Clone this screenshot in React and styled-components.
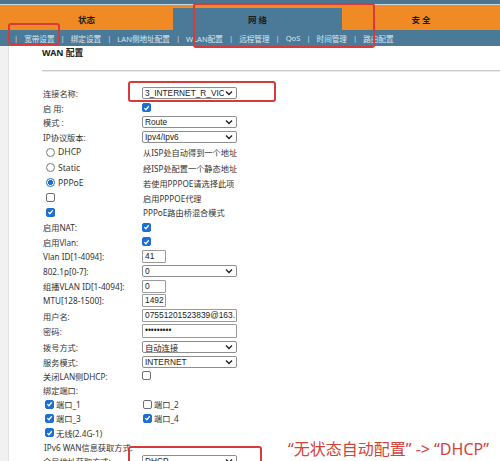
import React from 'react';
import styled, { createGlobalStyle } from 'styled-components';

const Global = createGlobalStyle`
  html, body { margin: 0; padding: 0; background: #fff; }
  body {
    font-family: "Noto Sans", "Noto Sans CJK SC", sans-serif;
    color: #333;
  }
`;

const tabs = [
  { label: '状态' },
  { label: '网 络', active: true },
  { label: '安 全' },
];

const subNav = ['宽带设置', '绑定设置', 'LAN侧地址配置', 'WLAN配置', '远程管理', 'QoS', '时间管理', '路由配置'];

function Select({ value }) {
  return (
    <F.Select>
      <span>{value}</span>
      <svg width="8" height="6" viewBox="0 0 8 6">
        <path d="M1 1.5 L4 4.5 L7 1.5" fill="none" stroke="#222" strokeWidth="1.4" />
      </svg>
    </F.Select>
  );
}

function Check({ on }) {
  return (
    <F.Check $on={on}>
      {on && (
        <svg width="8" height="8" viewBox="0 0 8 8">
          <path d="M1.5 4.2 L3.3 6 L6.6 2" fill="none" stroke="#fff" strokeWidth="1.4" />
        </svg>
      )}
    </F.Check>
  );
}

function Radio({ on }) {
  return <F.Radio $on={on} />;
}

function App() {
  return (
    <P.Page>
      <Global />
      <P.TopStrip />
      <P.Tabs>
        {tabs.map((t) => (
          <P.Tab key={t.label} $active={t.active}>
            {t.label}
          </P.Tab>
        ))}
      </P.Tabs>
      <P.SubNav>
        <span className="sep">|</span>
        {subNav.map((s, i) => (
          <React.Fragment key={s}>
            <span>{s}</span>
            {i < subNav.length - 1 && <span className="sep">|</span>}
          </React.Fragment>
        ))}
      </P.SubNav>
      <P.Body>
        <P.Gutter />
        <P.Main>
          <P.Title>WAN 配置</P.Title>
          <P.Rule />
          <P.Row>
            <P.Label>连接名称:</P.Label>
            <Select value="3_INTERNET_R_VIC" />
          </P.Row>
          <P.Row $h={14}>
            <P.Label>启 用:</P.Label>
            <Check on />
          </P.Row>
          <P.Row>
            <P.Label>模式 :</P.Label>
            <Select value="Route" />
          </P.Row>
          <P.Row>
            <P.Label>IP协议版本:</P.Label>
            <Select value="Ipv4/Ipv6" />
          </P.Row>
          <P.Row $h={15.5}>
            <P.Option>
              <Radio /> DHCP
            </P.Option>
            <P.Label>从ISP处自动得到一个地址</P.Label>
          </P.Row>
          <P.Row $h={15.5}>
            <P.Option>
              <Radio /> Static
            </P.Option>
            <P.Label>经ISP处配置一个静态地址</P.Label>
          </P.Row>
          <P.Row $h={15}>
            <P.Option>
              <Radio on /> PPPoE
            </P.Option>
            <P.Label>若使用PPPOE请选择此项</P.Label>
          </P.Row>
          <P.Row>
            <P.Option>
              <Check />
            </P.Option>
            <P.Label>启用PPPOE代理</P.Label>
          </P.Row>
          <P.Row>
            <P.Option>
              <Check on />
            </P.Option>
            <P.Label>PPPoE路由桥混合模式</P.Label>
          </P.Row>
          <P.Row>
            <P.Label>启用NAT:</P.Label>
            <Check on />
          </P.Row>
          <P.Row>
            <P.Label>启用Vlan:</P.Label>
            <Check on />
          </P.Row>
          <P.Row>
            <P.Label>Vlan ID[1-4094]:</P.Label>
            <F.Input>41</F.Input>
          </P.Row>
          <P.Row>
            <P.Label>802.1p[0-7]:</P.Label>
            <Select value="0" />
          </P.Row>
          <P.Row>
            <P.Label>组播VLAN ID[1-4094]:</P.Label>
            <F.Input>0</F.Input>
          </P.Row>
          <P.Row>
            <P.Label>MTU[128-1500]:</P.Label>
            <F.Input>1492</F.Input>
          </P.Row>
          <P.Row>
            <P.Label>用户名:</P.Label>
            <F.Input $wide>07551201523839@163.</F.Input>
          </P.Row>
          <P.Row $h={16}>
            <P.Label>密码:</P.Label>
            <F.Input $wide $tall>•••••••••</F.Input>
          </P.Row>
          <P.Row $h={15.5}>
            <P.Label>拨号方式:</P.Label>
            <Select value="自动连接" />
          </P.Row>
          <P.Row $h={14}>
            <P.Label>服务模式:</P.Label>
            <Select value="INTERNET" />
          </P.Row>
          <P.Row $h={14}>
            <P.Label>关闭LAN侧DHCP:</P.Label>
            <Check />
          </P.Row>
          <P.Row $h={14.5}>
            <P.Label>绑定端口:</P.Label>
          </P.Row>
          <P.Row $h={14}>
            <P.Port>
              <Check on />
              端口_1
            </P.Port>
            <P.Port $second>
              <Check />
              端口_2
            </P.Port>
          </P.Row>
          <P.Row $h={14}>
            <P.Port>
              <Check on />
              端口_3
            </P.Port>
            <P.Port $second>
              <Check on />
              端口_4
            </P.Port>
          </P.Row>
          <P.Row $h={15}>
            <P.Port>
              <Check on />
              无线(2.4G-1)
            </P.Port>
          </P.Row>
          <P.Row $h={14}>
            <P.Wide>IPv6 WAN信息获取方式:</P.Wide>
            <P.Note>“无状态自动配置” -&gt; “DHCP”</P.Note>
          </P.Row>
          <P.Row>
            <P.Label>全局地址获取方式:</P.Label>
            <Select value="DHCP" />
          </P.Row>
        </P.Main>
      </P.Body>

      <P.Mark $x={8} $y={23} $w={52} $h={22} />
      <P.Mark $x={193} $y={3} $w={182} $h={45} />
      <P.Mark $x={128} $y={81} $w={148} $h={21} />
      <P.Mark $x={128} $y={446} $w={134} $h={24} />
    </P.Page>
  );
}

export default App;

const P = {
  Page: styled.div`
    position: relative;
    width: 500px;
    height: 461px;
    overflow: hidden;
    background: #fff;
  `,
  TopStrip: styled.div`
    height: 4px;
    background: #4d7590;
    border-bottom: 1px solid #c9d6de;
  `,
  Tabs: styled.div`
    display: grid;
    grid-template-columns: 173px 169px 1fr;
    height: 25px;
    background: #f08a24;
  `,
  Tab: styled.div`
    display: flex;
    align-items: center;
    justify-content: center;
    margin-top: ${(p) => (p.$active ? '3px' : '0')};
    padding-top: ${(p) => (p.$active ? '0' : '3px')};
    background: ${(p) => (p.$active ? '#4b7998' : '#f08a24')};
    color: #1d1d1d;
    font-size: 8.5px;
    font-weight: 700;
  `,
  SubNav: styled.div`
    display: flex;
    align-items: center;
    gap: 6px;
    height: 16px;
    padding-left: 14px;
    background: #4b7998;
    color: #dbe6ee;
    font-size: 7.6px;
    white-space: nowrap;
    .sep {
      color: #d0dde6;
    }
  `,
  Body: styled.div`
    display: flex;
  `,
  Gutter: styled.div`
    width: 8px;
    height: 420px;
    background: #f1f1f1;
    border-right: 1px solid #e2e2e2;
  `,
  Main: styled.div`
    flex: 1;
    padding-left: 33px;
  `,
  Title: styled.div`
    height: 15px;
    line-height: 15px;
    font-size: 8.8px;
    font-weight: 700;
    color: #222;
  `,
  Rule: styled.div`
    margin-top: 9px;
    margin-bottom: 15px;
    height: 1px;
    background: #c9c9c9;
    box-shadow: 0 1px 0 #ececec;
  `,
  Row: styled.div`
    position: relative;
    display: grid;
    grid-template-columns: 100px 1fr;
    align-items: center;
    height: ${(p) => p.$h || 14.75}px;
    font-size: 8.2px;
  `,
  Label: styled.div`
    color: #333;
    white-space: nowrap;
    padding-left: 1px;
  `,
  Option: styled.div`
    display: flex;
    align-items: center;
    gap: 3px;
    padding-left: 4px;
    color: #333;
    font-size: 8.6px;
  `,
  Port: styled.div`
    display: flex;
    align-items: center;
    gap: 2px;
    padding-left: ${(p) => (p.$second ? '1px' : '3px')};
    color: #333;
    white-space: nowrap;
  `,
  Wide: styled.div`
    grid-column: 1 / span 2;
    padding-left: 2px;
    color: #333;
    white-space: nowrap;
  `,
  Note: styled.div`
    position: absolute;
    left: 246px;
    top: -4px;
    color: #d2433a;
    font-size: 16px;
    white-space: nowrap;
  `,
  Mark: styled.div`
    position: absolute;
    left: ${(p) => p.$x}px;
    top: ${(p) => p.$y}px;
    width: ${(p) => p.$w}px;
    height: ${(p) => p.$h}px;
    border: 2px solid #d63a3a;
    border-radius: 3px;
    box-sizing: border-box;
    pointer-events: none;
  `,
};

const F = {
  Select: styled.div`
    display: flex;
    align-items: center;
    justify-content: space-between;
    box-sizing: border-box;
    width: 95px;
    height: 12px;
    padding: 0 3px 0 2px;
    border: 1px solid #8d8d8d;
    border-radius: 2px;
    background: #fff;
    color: #222;
    font-family: "Liberation Sans", "Noto Sans CJK SC", sans-serif;
    font-size: 8.3px;
    overflow: hidden;
    white-space: nowrap;
    span {
      overflow: hidden;
    }
    svg {
      flex: none;
      margin-left: 1px;
    }
  `,
  Input: styled.div`
    box-sizing: border-box;
    width: ${(p) => (p.$wide ? '95px' : '24px')};
    height: ${(p) => (p.$tall ? '14px' : '13px')};
    padding: 0 2px;
    border: 1px solid #9a9a9a;
    border-radius: 1px;
    color: #222;
    font-family: "Liberation Sans", sans-serif;
    font-size: 8.4px;
    line-height: 11px;
    overflow: hidden;
    white-space: nowrap;
    background: #fff;
  `,
  Check: styled.span`
    display: inline-flex;
    align-items: center;
    justify-content: center;
    box-sizing: border-box;
    width: 9px;
    height: 9px;
    border-radius: 2px;
    border: 1px solid ${(p) => (p.$on ? '#1d6fd2' : '#6f6f6f')};
    background: ${(p) => (p.$on ? '#1d6fd2' : '#fff')};
    flex: none;
  `,
  Radio: styled.span`
    display: inline-block;
    box-sizing: border-box;
    width: 9px;
    height: 9px;
    border-radius: 50%;
    border: 1px solid ${(p) => (p.$on ? '#1d6fd2' : '#777')};
    background: ${(p) => (p.$on ? 'radial-gradient(circle, #1d6fd2 0 2.3px, #fff 2.6px)' : '#fff')};
    flex: none;
  `,
};
